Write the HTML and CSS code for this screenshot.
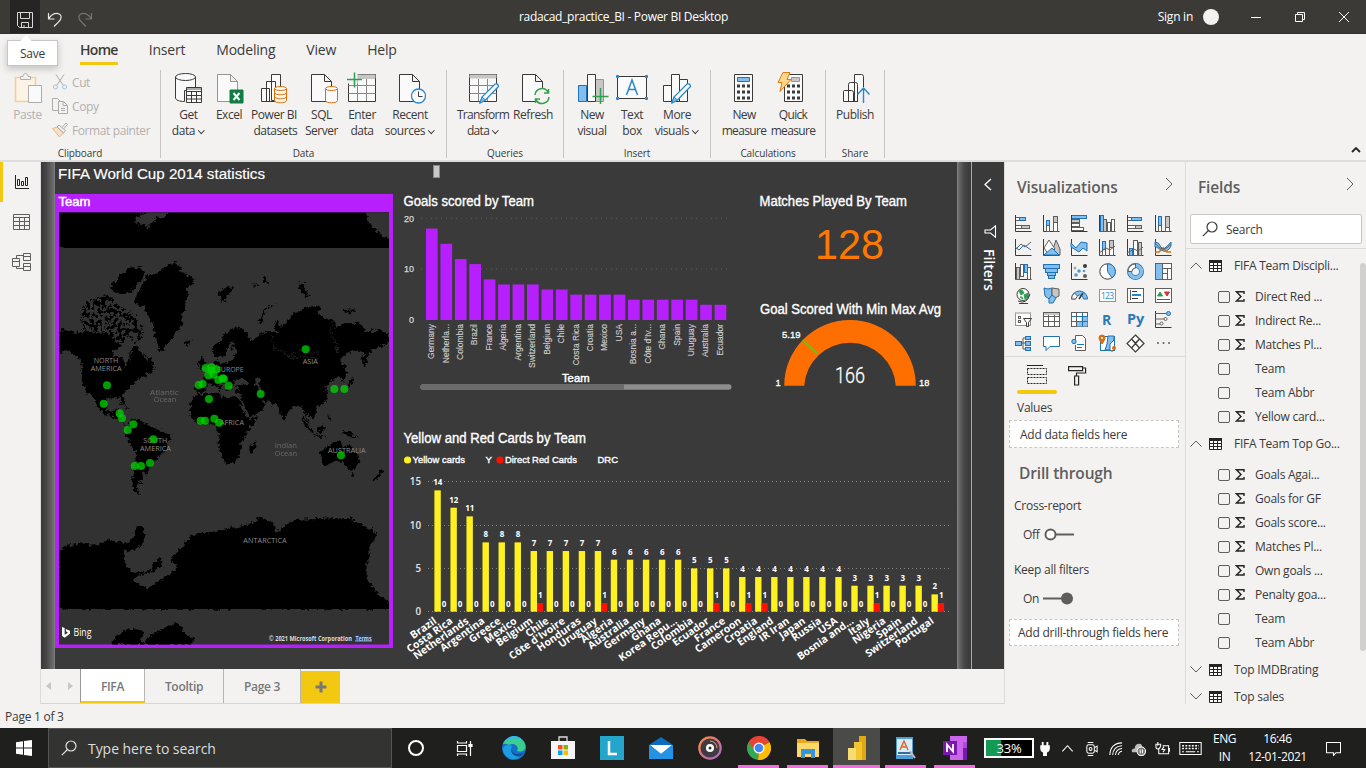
FILE: index.html
```html
<!DOCTYPE html>
<html lang="en">
<head>
<meta charset="utf-8">
<title>radacad_practice_BI - Power BI Desktop</title>
<link rel="stylesheet" href="styles.css">
</head>
<body>
<div class="app">
  <header class="titlebar">
    <div class="quick">
      <span class="qbtn active"><svg width="16" height="16" viewBox="0 0 16 16" fill="none" stroke="#d8d8d8"><path d="M.5 .5h15v15h-13l-2-2zM3.500 .5v6h9v-6M4.500 15.500v-5h7v5M7 15.500v-2.500"/></svg></span>
      <span class="qbtn"><svg width="16" height="16" viewBox="0 0 16 16" fill="none" stroke="#e6e6e6" stroke-width="1.200"><path d="M1.500 1v6h6M1.500 6.800C4 3 7 1.200 10 1.300c3.600.2 5 3.200 3.600 6-1 2-4 4.500-6.600 7.200"/></svg></span>
      <span class="qbtn dim"><svg width="16" height="16" viewBox="0 0 16 16" fill="none" stroke="#777573" stroke-width="1.200"><path d="M14.500 1v6h-6M14.500 6.800C12 3 9 1.200 6 1.300c-3.600.2-5 3.200-3.600 6 1 2 4 4.500 6.600 7.200"/></svg></span>
    </div>
    <div class="doc-title">radacad_practice_BI - Power BI Desktop</div>
    <div class="window-tools">
      <span class="signin">Sign in</span><span class="avatar"></span>
      <svg class="win" viewBox="0 0 12 12"><path d="M1 6.500h10"/></svg>
      <svg class="win" viewBox="0 0 12 12"><path d="M1.500 3.500h7v7h-7zM3.500 3.500v-2h7v7h-2"/></svg>
      <svg class="win" viewBox="0 0 12 12"><path d="M1 1l10 10M11 1L1 11"/></svg>
    </div>
    <div class="tooltip">Save</div>
  </header>

  <nav class="tabs">
    <span class="tab on">Home</span><span class="tab">Insert</span><span class="tab">Modeling</span><span class="tab">View</span><span class="tab">Help</span>
  </nav>

  <section class="ribbon">
    <div class="group g-clip">
      <div class="buttons">
        <div class="btn faded w-paste"><svg viewBox="0 0 30 30"><path d="M2.500 4.500h20v24h-20z" fill="#fbf3e4" stroke="#f0cfa0" stroke-width="1.600"/><path d="M7.500 6.500v-3h2.500c0-4 5-4 5 0h2.500v3z" fill="#f3f2f1" stroke="#b0aeac"/><path d="M15.500 12.500h13v17h-13z" fill="#fafafa" stroke="#b0aeac"/></svg><span>Paste</span></div>
        <div class="clip-list">
          <div><svg viewBox="0 0 16 16" fill="none" stroke="#aeacaa"><path d="M4 .5l7 10.500M12 .5L5 11"/><circle cx="3.500" cy="13" r="2" stroke="#9cc4dc"/><circle cx="12.500" cy="13" r="2" stroke="#9cc4dc"/></svg>Cut</div>
          <div><svg viewBox="0 0 16 16" fill="none" stroke="#aeacaa"><path d="M6 12.500H.5V.5h5l3 3M6.500 3.500h5l4 4v8h-9zM11 3.500v4h4.500M9 10.500h4M9 12.500h4"/></svg>Copy</div>
          <div><svg viewBox="0 0 16 16" fill="none" stroke="#aeacaa"><path d="M5 5l-4.500 1.500 7 8.500 4-4z" fill="#f6e1c5" stroke="#e9b888"/><path d="M5 5l6.500 6 2-2.500L7 3zM10 5.500l4-4.500 1.500 1.500-4 4.500"/></svg>Format painter</div>
        </div>
      </div>
      <div class="caption">Clipboard</div>
    </div>
    <div class="group g-data">
      <div class="buttons">
        <div class="btn w-get"><svg viewBox="0 0 30 30" fill="#fafafa" stroke="#3b3a39"><path d="M1.500 4v21c0 2 4 3.500 9 3.500V17.500h11V4"/><ellipse cx="11.500" cy="4" rx="10" ry="3.500"/><path d="M12.500 14.500h15v15h-15z"/><path d="M13 15.500h14M13 16.500h14" stroke="#aaa"/><path d="M12.500 18.500h15M12.500 22.500h15M12.500 26h15M17.500 18v11M22.500 18v11"/></svg><span>Get</span><span>data <i class="car"></i></span></div>
        <div class="btn w-excel"><svg viewBox="0 0 30 30" fill="#fafafa" stroke="#979593"><path d="M3.500 1.500h13l7 7v20h-20zM16.500 1.500v7h7"/><path d="M16 17h13v13H16z" fill="#107c41" stroke="#107c41"/><path d="M19.500 20l6 7M25.500 20l-6 7" stroke="#fff" stroke-width="2"/></svg><span>Excel</span></div>
        <div class="btn w-pbi"><svg viewBox="0 0 30 30" fill="#fafafa" stroke="#3b3a39"><path d="M12.500 1.500h9v26h-9zM7.500 8.500h9v20h-9zM2.500 15.500h8v13h-8z"/><path d="M15.500 15.500v12c0 3 12 3 12 0v-12" stroke="#d9700f" fill="#fff3e3"/><ellipse cx="21.500" cy="15.500" rx="6" ry="2" stroke="#d9700f"/><path d="M15.500 19.500c0 3 12 3 12 0M15.500 23.500c0 3 12 3 12 0" fill="none" stroke="#d9700f"/></svg><span>Power BI</span><span>&nbsp;datasets</span></div>
        <div class="btn w-sql"><svg viewBox="0 0 30 30" fill="#fafafa" stroke="#3b3a39"><path d="M4.500 1.500h13l7 7v20h-20zM17.500 1.500v7h7"/><path d="M18.500 15.500v12c0 3 12 3 12 0v-12" stroke="#d9700f"/><ellipse cx="24.500" cy="15.500" rx="6" ry="2" stroke="#d9700f"/></svg><span>SQL</span><span>Server</span></div>
        <div class="btn w-enter"><svg viewBox="0 0 30 30" fill="#fafafa" stroke="#3b3a39"><path d="M1.500 1.500h27v27h-27z"/><path d="M10 2h18v3.500H10z" fill="#c8c6c4" stroke="#c8c6c4"/><path d="M1.500 12.500h27M1.500 20.500h27M10.500 6v22M19.500 6v22" stroke="#888"/><path d="M-.5 -.5h11v11h-11z" fill="#f3f2f1" stroke="none"/><path d="M7.500-.5v15M0 6.500h15" stroke="#2f9e4f" stroke-width="1.500"/></svg><span>Enter</span><span>data</span></div>
        <div class="btn w-recent"><svg viewBox="0 0 30 30" fill="#fafafa" stroke="#3b3a39"><path d="M4.500 1.500h13l7 7v20h-20zM17.500 1.500v7h7"/><circle cx="23.500" cy="23" r="7" stroke="#2b88c8" stroke-width="1.300"/><path d="M23.500 18.500v5h4" fill="none"/></svg><span>Recent</span><span>sources <i class="car"></i></span></div>
      </div>
      <div class="caption">Data</div>
    </div>
    <div class="group g-query">
      <div class="buttons">
        <div class="btn w-trans"><svg viewBox="0 0 30 30" fill="#fafafa" stroke="#3b3a39"><path d="M1.500 1.500h27v27h-27z"/><path d="M2 2h26v3H2z" fill="#c8c6c4" stroke="#c8c6c4"/><path d="M1.500 12.500h27M1.500 20.500h27M10.500 6v22M19.500 6v22" stroke="#888"/><path d="M12 30l2-6L27 11q3-1 3.500 2.500L17.500 27z" stroke="#2b88c8" stroke-width="1.300"/><path d="M12 30l2-6 3.500 3z" fill="#83beec" stroke="#2b88c8"/></svg><span>Transform</span><span>data <i class="car"></i></span></div>
        <div class="btn w-refresh"><svg viewBox="0 0 30 30" fill="#fafafa" stroke="#3b3a39"><path d="M4.500 1.500h13l7 7v20h-20zM17.500 1.500v7h7"/><circle cx="24" cy="23" r="8" fill="#f3f2f1" stroke="none"/><path d="M17 22a7 7 0 0 1 13-3M30.500 16v4H26M31 24a7 7 0 0 1-13 3M17.500 30v-4H22" fill="none" stroke="#37a04f" stroke-width="1.500"/></svg><span>Refresh</span></div>
      </div>
      <div class="caption">Queries</div>
    </div>
    <div class="group g-insert">
      <div class="buttons">
        <div class="btn w-nv"><svg viewBox="0 0 30 30" fill="#fafafa" stroke="#3b3a39"><path d="M18.500 6.500h8v22h-8z" fill="#c8c6c4" stroke="#979593"/><path d="M1.500 12.500h8v16h-8z" fill="#83beec" stroke="#1f72b5"/><path d="M10.500 1.500h8v27h-8z"/><path d="M23.500 15v16M15.500 23.500h16" stroke="#2f9e4f" stroke-width="1.500"/></svg><span>New</span><span>visual</span></div>
        <div class="btn w-tb"><svg viewBox="0 0 30 30" fill="#fafafa" stroke="#3b3a39"><path d="M.5 3.500h29v22H.5z"/><path d="M9.500 22l5.500-15 5.500 15M11.500 16.500h7" fill="none" stroke="#2b88c8" stroke-width="1.500"/><path d="M-.5 2.500h2v2h-2zM28.500 2.500h2v2h-2zM-.5 24.500h2v2h-2zM28.500 24.500h2v2h-2z" fill="#2b88c8" stroke="#2b88c8"/></svg><span>Text</span><span>box</span></div>
        <div class="btn w-mv"><svg viewBox="0 0 30 30" fill="#fafafa" stroke="#3b3a39"><path d="M17.500 6.500h8v22h-8zM1.500 12.500h8v16h-8zM9.500 1.500h8v27h-8z"/><path d="M10 30l2-6L25 11q3-1 3.500 2.500L15.500 27z" stroke="#2b88c8" stroke-width="1.300"/><path d="M10 30l2-6 3.500 3z" fill="#83beec" stroke="#2b88c8"/></svg><span>More</span><span>visuals <i class="car"></i></span></div>
      </div>
      <div class="caption">Insert</div>
    </div>
    <div class="group g-calc">
      <div class="buttons">
        <div class="btn w-nm"><svg viewBox="0 0 30 30" fill="#fafafa" stroke="#3b3a39"><path d="M5.500 1.500h18v27h-18z"/><path d="M8.500 4.500h12v4h-12z" fill="#83beec" stroke="#1f72b5"/><path d="M8 13h13M8 19h13M8 25h13" stroke-width="3" stroke-dasharray="3 2"/></svg><span>New</span><span>measure</span></div>
        <div class="btn w-qm"><svg viewBox="0 0 30 30" fill="#fafafa" stroke="#3b3a39"><path d="M6.500 1.500h18v27h-18z"/><path d="M13.500 4.500h8v4h-8z" fill="#c8c6c4" stroke="#979593"/><path d="M9 13h13M9 19h13M9 25h13" stroke-width="3" stroke-dasharray="3 2"/><path d="M5-.5h7l-3 7h4L2 18.500l2-9H0z" fill="#ffd68a" stroke="#e07a10"/></svg><span>Quick</span><span>measure</span></div>
      </div>
      <div class="caption">Calculations</div>
    </div>
    <div class="group g-share">
      <div class="buttons">
        <div class="btn w-pub"><svg viewBox="0 0 30 30" fill="#fafafa" stroke="#3b3a39"><path d="M14.500 28.500v-27h7q2 0 2 2v25zM8.500 28.500v-17q0-2 2-2h5q2 0 2 2v17zM3.500 28.500v-10q0-1 1-1h7q2 0 2 2v9z"/><path d="M18 14h12v16H18z" fill="#f3f2f1" stroke="none"/><path d="M23.500 30V15M17.500 21.500l6-6.500 6 6.500" fill="none" stroke="#2b88c8" stroke-width="1.400"/></svg><span>Publish</span></div>
      </div>
      <div class="caption">Share</div>
    </div>
    <svg class="collapse" viewBox="0 0 10 6"><path d="M1 5l4-4 4 4" fill="none" stroke="#252423" stroke-width="1.800"/></svg>
  </section>

  <main class="main">
    <aside class="rail">
      <span class="rail-item on"><svg width="16" height="16" viewBox="0 0 16 16" fill="none" stroke="#252423"><path d="M1.500 1v13.500H15M3.500 5.500h2v6h-2zM7.500 7.500h2v4h-2zM11.500 3.500h2v8h-2z" /></svg></span>
      <span class="rail-item"><svg width="17" height="16" viewBox="0 0 17 16" fill="none" stroke="#605e5c"><path d="M.5 .5h16v15H.5zM.5 3.500h16M.5 7.500h16M.5 11.500h16M6.500 3.500v12M11.500 3.500v12"/></svg></span>
      <span class="rail-item"><svg width="19" height="18" viewBox="0 0 19 18" fill="none" stroke="#605e5c"><path d="M.5 5.500h7v8h-7zM.5 8.500h7M11.500 .5h7v7h-7zM11.500 3.500h7M11.500 10.500h7v7h-7zM11.500 13.500h7M4.500 5.500v-3h7M4.500 13.500v2h7"/></svg></span>
    </aside>

    <div class="work">
      <div class="canvas">
        <div class="gutter left"></div>
        <div class="page" id="page"></div>
        <div class="gutter right"></div>
        <div class="filters">
          <svg width="10" height="13" viewBox="0 0 10 13"><path d="M8 1L2 6.500 8 12" fill="none" stroke="#fff" stroke-width="1.300"/></svg>
          <svg class="funnel" width="13" height="13" viewBox="0 0 13 13"><path d="M11.500 .8v11.400L6.500 8H1V5h5.500z" fill="none" stroke="#fff" stroke-width="1.100"/></svg>
          <span>Filters</span>
        </div>
      </div>
      <div class="pagetabs">
        <span class="arrows"><i class="al"></i><i class="ar"></i></span>
        <span class="ptab on p1">FIFA</span><span class="ptab p2">Tooltip</span><span class="ptab p3">Page 3</span><span class="add"><svg width="12" height="12" viewBox="0 0 12 12"><path d="M6 .5v11M.5 6h11" stroke="#777" stroke-width="3"/></svg></span>
      </div>
    </div>

    <aside class="viz">
      <div class="pane-head"><h2>Visualizations</h2><svg width="8" height="14" viewBox="0 0 8 14"><path d="M1 1l6 6-6 6" fill="none" stroke="#605e5c"/></svg></div>
      <div class="viz-grid" id="vizgrid"></div>
      <div class="viz-tabs">
        <span class="vt on"><svg width="20" height="20" viewBox="0 0 20 20" fill="none" stroke="#252423"><path d="M0 .5h16"/><path d="M.5 3.500h19v6H.5zM.5 12.500h19v6H.5z" stroke-dasharray="2 1"/></svg></span>
        <span class="vt"><svg width="19" height="21" viewBox="0 0 19 21" fill="none" stroke="#252423" stroke-width="1.200"><path d="M.6 1.600h14v4H.6zM14.600 3h3v5H8.500v3M6.600 11h4v9h-4z"/></svg></span>
      </div>
      <div class="lbl values">Values</div>
      <div class="drop d1">Add data fields here</div>
      <h2 class="drill">Drill through</h2>
      <div class="lbl cross">Cross-report</div>
      <div class="toggle"><span>Off</span><svg width="31" height="13" viewBox="0 0 31 13"><path d="M11 6.500h19" stroke="#605e5c" stroke-width="2"/><circle cx="6.500" cy="6.500" r="5" fill="#fff" stroke="#605e5c" stroke-width="2"/></svg></div>
      <div class="lbl keep">Keep all filters</div>
      <div class="toggle"><span>On</span><svg width="31" height="13" viewBox="0 0 31 13"><path d="M0 6.500h20" stroke="#605e5c" stroke-width="2"/><circle cx="24" cy="6.500" r="6" fill="#605e5c"/></svg></div>
      <div class="drop d2">Add drill-through fields here</div>
    </aside>

    <aside class="fields">
      <div class="pane-head"><h2>Fields</h2><svg width="8" height="14" viewBox="0 0 8 14"><path d="M1 1l6 6-6 6" fill="none" stroke="#605e5c"/></svg></div>
      <div class="search"><svg width="16" height="16" viewBox="0 0 16 16" fill="none" stroke="#3b3a39" stroke-width="1.200"><circle cx="10" cy="6" r="5"/><path d="M6.500 9.500L.8 15.200"/></svg>Search</div>
      <div class="field-list" id="fieldlist"></div>
    </aside>
  </main>

  <footer class="status">Page 1 of 3</footer>

  <div class="taskbar">
    <span class="start"><svg width="16" height="16" viewBox="0 0 16 16" fill="#fff"><path d="M0 2.200l7-1v6.300H0zM8 1l8-1v7.500H8zM0 8.500h7v6.300l-7-1zM8 8.500h8V16l-8-1z"/></svg></span>
    <div class="tsearch"><svg width="16" height="16" viewBox="0 0 16 16" fill="none" stroke="#e0e0e0" stroke-width="1.200"><circle cx="10" cy="6" r="5"/><path d="M6.500 9.500L.8 15.200"/></svg>Type here to search</div>
    <span class="task"><svg viewBox="0 0 24 24"><circle cx="12" cy="12" r="7" fill="none" stroke="#fff" stroke-width="2"/></svg></span>
    <span class="task"><svg viewBox="0 0 24 24" fill="none" stroke="#fff" stroke-width="1.200"><path d="M4.500 9.500h9v6h-9zM4.500 5v2h9V5M4.500 20v-2h9v2M17.500 5v15"/><path d="M16 8.500h3v2h-3z" fill="#fff"/></svg></span>
    <span class="task"><svg viewBox="0 0 24 24"><circle cx="12" cy="12" r="12" fill="#1470c4"/><path d="M1 8C4-1 19-2 23 8c2 6-3 9-8 7 3-5-4-9-8-6-3-2-5-1-6-1z" fill="#3bcf8e"/><path d="M2 6C8-3 18 0 20 4 14 1 6 3 2 6z" fill="#35b9e8"/><path d="M10 11c-3 4 1 10 8 10-8 6-18-1-17-9 3-4 8-4 9-1z" fill="#1b9de2"/><path d="M10 11c-2 5 3 10 12 6-6 6-15 1-12-6z" fill="#0e3f7d"/></svg></span>
    <span class="task"><svg viewBox="0 0 24 24"><path d="M8 6V1h8v5" fill="none" stroke="#ddd" stroke-width="1.300"/><path d="M0 5h24v18H0z" fill="#f5f5f5"/><path d="M7 9h4.500v4.500H7z" fill="#f25022"/><path d="M12.500 9H17v4.500h-4.500z" fill="#7fba00"/><path d="M7 14.500h4.500V19H7z" fill="#00a4ef"/><path d="M12.500 14.500H17V19h-4.500z" fill="#ffb900"/></svg></span>
    <span class="task"><svg viewBox="0 0 24 24"><path d="M0 0h24v24H0z" fill="#24a5cc"/><path d="M9 5v13h8" fill="none" stroke="#fff" stroke-width="2.500"/></svg></span>
    <span class="task"><svg viewBox="0 0 24 24"><path d="M0 9L12 1l12 8v13H0z" fill="#0f6cbd"/><path d="M1 9h22L12 18z" fill="#fff"/><path d="M0 9l12 9 12-9v14H0z" fill="#2493e6"/></svg></span>
    <span class="task"><svg viewBox="0 0 24 24"><defs><linearGradient id="gr" x2="1" y2="1"><stop stop-color="#ff8a3c"/><stop offset="1" stop-color="#a767d8"/></linearGradient></defs><circle cx="12" cy="12" r="10.700" fill="#423a42" stroke="url(#gr)" stroke-width="2.200"/><circle cx="12" cy="12" r="4" fill="#fff"/><circle cx="12" cy="12" r="1.500" fill="#333"/><path d="M12 5a7 7 0 0 1 7 7" stroke="#ff9460" fill="none"/></svg></span>
    <span class="task run"><svg viewBox="0 0 24 24"><path d="M12 12L1.600 6A12 12 0 0 1 22.400 6z" fill="#e94335"/><path d="M12 12L1.600 6A12 12 0 0 0 11 24z" fill="#34a853"/><path d="M12 12L22.400 6A12 12 0 0 1 11 24z" fill="#fbbc05"/><path d="M1.600 6h11L7 14z" fill="#e94335"/><circle cx="12" cy="12" r="5.500" fill="#fff"/><circle cx="12" cy="12" r="4.300" fill="#4285f4"/></svg></span>
    <span class="task run"><svg viewBox="0 0 24 24"><path d="M1 3h8l2 2h12v5H1z" fill="#e9a820"/><path d="M1 7h22v14H1z" fill="#ffd869"/><path d="M5 13h14v9h-4v-4H9v4H5z" fill="#3494dc"/></svg></span>
    <span class="task run hot"><svg viewBox="0 0 24 24"><path d="M14 0h7v24h-7z" fill="#e0a90f"/><path d="M9 6h8v18H9z" fill="#f2c531"/><path d="M3 12h8v12H3z" fill="#f7dc72"/></svg></span>
    <span class="task run"><svg viewBox="0 0 24 24"><path d="M2 1h17v22H2z" fill="#4f9ed8"/><path d="M3 3h15v16H3z" fill="#d7ecfb"/><path d="M6 14l4-9 4 9M7.500 11h5" stroke="#e06a2a" fill="none" stroke-width="1.500"/><path d="M4 16h13v2H4z" fill="#336ca0"/><path d="M16 15l5 7" stroke="#bbb" stroke-width="2"/></svg></span>
    <span class="task run"><svg viewBox="0 0 24 24"><path d="M7 0h17v24H7z" fill="#ca64ea"/><path d="M20 6h4v6h-4z" fill="#ae4bd5"/><path d="M20 12h4v12h-4z" fill="#7719aa"/><path d="M0 5h14v14H0z" fill="#7719aa"/><path d="M4 16V8.500l6 7V8" stroke="#fff" stroke-width="1.800" fill="none"/></svg></span>
    <span class="battery"><b>33%</b></span>
    <span class="tray t1"><svg viewBox="0 0 16 16"><path d="M5 1v4M10 1v4" stroke="#fff" stroke-width="2"/><path d="M3 5h9v3q0 3-3 4v4H6v-4q-3-1-3-4z" fill="#fff"/></svg></span>
    <span class="tray t2"><svg viewBox="0 0 16 16"><path d="M2.500 11L8 5l5.500 6"/></svg></span>
    <span class="tray t3"><svg viewBox="0 0 16 16"><rect x="3" y="4" width="8" height="9" rx="2"/><circle cx="7" cy="8.500" r="1.500"/><path d="M4 1.500h6M4 15.500h6M11.500 7l2.500-1.500v6L11.500 10"/></svg></span>
    <span class="tray t4"><svg viewBox="0 0 16 16"><path d="M2 15C2 7 7 2 15 2M5 15c0-6 4-10 10-10M8 15c0-4 3-7 7-7M11 15c0-2 2-4 4-4"/></svg></span>
    <span class="tray t5"><svg viewBox="0 0 16 16"><path d="M1 12q-1-4 3-4 0-5 5-5 3 0 3 4 3 0 3 5z" fill="#bbb" stroke="none"/><circle cx="11" cy="11" r="4.500" fill="#777"/><path d="M9.800 9v4M12.200 9v4"/></svg></span>
    <span class="tray t6"><svg viewBox="0 0 16 16"><path d="M4 8.500v5h10.500V5H8M3 1v4M1 3.500v2q0 3 2 3t3-3v-2zM15.500 7.500v4M9.500 6l-2 3h3l-2 3"/></svg></span>
    <span class="tray t7"><svg class="kbd" viewBox="0 0 24 14"><path d="M.5 .5h23v13H.5z"/><path d="M3 4h18M3 7h18" stroke-dasharray="2 1.500" stroke-width="1.500"/><path d="M3 10.500h2M7 10.500h10M19 10.500h2"/></svg></span>
    <span class="lang"><span>ENG</span><span>IN</span></span>
    <span class="clock"><span>16:46</span><span>12-01-2021</span></span>
    <span class="tray t8"><svg viewBox="0 0 16 16"><path d="M.5 1.500h15v11h-5L8 15.500V12.500H.5z"/></svg></span>
  </div>
</div>
<script src="app.js"></script>
</body>
</html>
```
FILE: styles.css
```css
* { box-sizing: border-box; }
body { margin: 0; width: 1366px; height: 768px; overflow: hidden; font-family: "Open Sans", "Noto Sans", sans-serif; font-size: 12px; letter-spacing: -0.25px; color: #3b3a39; background: #f3f2f1; }
h2 { margin: 0; font-size: 15.5px; font-weight: 600; color: #605e5c; letter-spacing: -0.15px; line-height: 20px; }
.app { display: flex; flex-direction: column; height: 768px; }

.titlebar { position: relative; height: 34px; flex: none; background: #3b3a37; border-bottom: 1px solid #33302e; display: flex; justify-content: space-between; color: #fff; }
.quick { display: flex; padding-left: 10px; width: 430px; }
.qbtn { width: 30px; display: flex; align-items: center; justify-content: center; padding-top: 6px; }
.qbtn.active { background: #262523; }
.doc-title { width: 386px; padding-right: 6px; text-align: center; line-height: 34px; font-size: 12px; letter-spacing: -0.3px; }
.window-tools { width: 543px; display: flex; align-items: center; justify-content: flex-end; padding-right: 16px; }
.signin { margin-right: 10px; }
.avatar { width: 16px; height: 16px; border-radius: 50%; background: #f3f2f1; margin-right: 31px; }
.win { width: 12px; height: 12px; fill: none; stroke: #fff; }
.win + .win { margin-left: 32px; }
.tooltip { position: absolute; left: 7px; top: 40px; width: 51px; height: 26px; z-index: 5; background: #fff; border: 1px solid #c8c6c4; box-shadow: 0 3px 7px rgba(0,0,0,.2); color: #3b3a39; text-align: center; line-height: 26px; }
.tooltip::before { content: ""; position: absolute; left: 14px; top: -4px; width: 8px; height: 8px; background: #fff; transform: rotate(45deg); }

.tabs { height: 36px; flex: none; display: flex; padding-left: 80px; gap: 31px; font-size: 14px; letter-spacing: -0.2px; line-height: 31px; }
.tab { height: 31px; }
.tab.on { font-weight: 600; letter-spacing: -0.7px; border-bottom: 3px solid #f2c811; }

.ribbon { height: 92px; flex: none; display: flex; position: relative; border-bottom: 2px solid #dddddc; }
.group { height: 88px; border-right: 1px solid #c8c6c4; display: flex; flex-direction: column; }
.buttons { display: flex; height: 75px; flex: none; padding-top: 3px; }
.btn { display: flex; flex-direction: column; align-items: center; white-space: nowrap; line-height: 16px; letter-spacing: -0.45px; }
.btn svg { width: 30px; height: 30px; margin-bottom: 4px; overflow: visible; flex: none; }
.faded { color: #b3b0ad; }
.car { display: inline-block; width: 4.5px; height: 4.5px; border: solid #3b3a39; border-width: 0 1.500px 1.500px 0; transform: rotate(45deg); margin: 0 2px 3px 1px; }
.caption { text-align: center; font-size: 10px; line-height: 16px; letter-spacing: -0.1px; flex: none; }
.clip-list { display: flex; flex-direction: column; color: #b3b0ad; letter-spacing: -0.4px; }
.clip-list div { height: 24px; line-height: 20px; display: flex; gap: 4px; white-space: nowrap; }
.clip-list svg { width: 16px; height: 16px; margin-top: 1px; }
.g-clip { width: 161px; } .w-paste { width: 52px; padding-left: 3px; }
.g-data { width: 286px; } .g-data .buttons { padding-left: 7px; }
.w-get { width: 41px; } .w-excel { width: 40px; } .w-pbi { width: 50px; } .w-sql { width: 45px; } .w-enter { width: 36px; } .w-recent { width: 60px; }
.g-query { width: 117px; } .g-query .buttons, .g-insert .buttons, .g-calc .buttons { padding-left: 9px; }
.w-trans { width: 54px; letter-spacing: -0.7px; } .w-refresh { width: 46px; }
.g-insert { width: 147px; } .w-nv { width: 38px; } .w-tb { width: 42px; } .w-mv { width: 48px; }
.g-calc { width: 115px; } .w-nm { width: 48px; } .w-qm { width: 50px; } .w-nm, .w-qm { letter-spacing: -0.65px; }
.g-share { width: 59px; } .w-pub { width: 58px; }
.collapse { width: 10px; height: 6px; margin: 77px 5px 0 auto; }

.main { height: 542px; flex: none; display: flex; }
.rail { width: 41px; border-right: 1px solid #dddbd9; display: flex; flex-direction: column; }
.rail-item { height: 40px; display: flex; align-items: center; justify-content: center; border-left: 3px solid transparent; }
.rail-item.on { border-left-color: #f2c811; }
.work { width: 963px; display: flex; flex-direction: column; }
.canvas { height: 507px; display: flex; background: #3a3a3a; }
.gutter.left { width: 14px; background: linear-gradient(90deg, #393939 0, #444 35%, #6f6f6f 92%, #848484); }
.gutter.right { width: 14px; background: linear-gradient(90deg, #858585, #666 15%, #444 55%, #393939); }
.page { width: 902px; position: relative; background: #3a3a3a; }
.visual { position: absolute; display: block; }
.filters { width: 33px; border-left: 1px solid #a9a9a9; display: flex; flex-direction: column; align-items: center; color: #fff; padding-top: 16px; }
.filters .funnel { margin: 34px 0 11px 4px; }
.filters span { writing-mode: vertical-rl; font-size: 14px; font-weight: 600; line-height: 17px; letter-spacing: 0; margin-left: 2px; }
.pagetabs { height: 35px; display: flex; border-bottom: 1px solid #d8d6d4; color: #777; font-weight: 600; font-size: 12px; }
.arrows { width: 39px; display: flex; justify-content: space-between; align-items: center; padding: 0 7px 0 5px; }
.arrows i { border: 4px solid transparent; }
.arrows .al { border-right: 5px solid #c8c6c4; border-left-width: 0; }
.arrows .ar { border-left: 5px solid #c8c6c4; border-right-width: 0; }
.ptab { text-align: center; line-height: 35px; border-right: 1px solid #b8b6b4; letter-spacing: -0.3px; }
.ptab.on { background: #fff; border-bottom: 2px solid #f2c811; border-left: 1px solid #999; }
.p1 { width: 65px; } .p2 { width: 79px; } .p3 { width: 77px; }
.add { width: 39px; height: 32px; margin-top: 2px; background: #f2c811; display: flex; align-items: center; justify-content: center; }

.viz { width: 182px; border-right: 1px solid #dddbd9; border-left: 1px solid #dddbd9; padding-left: 3px; }
.pane-head { display: flex; justify-content: space-between; align-items: center; height: 49px; padding: 0 12px 0 9px; }
.pane-head svg { margin-bottom: 5px; }
.viz-grid { display: grid; grid-template-columns: repeat(6, 28px); grid-auto-rows: 24px; padding: 4px 0 0 7px; height: 145px; }
.viz-grid svg { width: 17px; height: 17px; overflow: visible; }
.viz-tabs { border-top: 1px solid #dddbd9; margin-left: -3px; padding-left: 12px; display: flex; height: 38px; }
.vt { width: 40px; height: 37px; display: flex; justify-content: center; padding-top: 8px; }
.vt.on { position: relative; }
.vt.on::after { content: ""; position: absolute; left: 0; bottom: 0; width: 40px; height: 4px; border-radius: 2px; background: #f2c811; }
.lbl { line-height: 18px; padding-left: 6px; }
.lbl.values { padding-left: 9px; margin-top: 5px; }
.drop { width: 170px; background: #fff; border: 1px dashed #c8c6c4; margin-left: 1px; padding-left: 10px; }
.d1 { height: 28px; line-height: 28px; margin-top: 3px; }
.d2 { height: 27px; line-height: 26px; padding-left: 8px; margin-top: 11px; white-space: nowrap; }
.drill { margin: 15px 0 0 11px; }
.cross { margin-top: 14px; }
.toggle { display: flex; align-items: center; gap: 4px; padding-left: 15px; height: 20px; margin: 9px 0 0; }
.toggle span { min-width: 16px; }
.keep { margin-top: 17px; }

.fields { width: 180px; position: relative; overflow: hidden; }
.fields .pane-head { padding: 0 12px 0 12px; }
.search { margin: 3px 4px 0 4px; height: 30px; width: 172px; border: 1px solid #c8c6c4; border-radius: 2px; background: #fff; display: flex; align-items: center; gap: 8px; padding-left: 11px; }
.field-list { margin-top: 4px; border-top: 1px solid #dddbd9; height: 455px; padding-top: 3px; position: relative; }
.field-list::after { content: ""; position: absolute; right: 0; top: 14px; width: 6px; height: 388px; background: #d2d0ce; border-radius: 3px; }
.table { height: 27px; display: flex; align-items: center; padding-left: 4px; white-space: nowrap; line-height: 16px; }
.table svg.ch { width: 12px; height: 7px; margin-right: 7px; }
.table svg.tb { width: 13px; height: 12px; margin-right: 12px; }
.items { padding: 5.500px 0 1.500px; }
.item { height: 24px; display: flex; align-items: center; padding-left: 32px; white-space: nowrap; }
.box { width: 12px; height: 12px; border: 1px solid #605e5c; border-radius: 2px; margin-right: 5px; }
.sig { width: 20px; height: 11px; }

.status { height: 24px; flex: none; padding-left: 5px; line-height: 25px; }
.taskbar { height: 40px; flex: none; background: #1f1f1e; color: #fff; display: flex; align-items: stretch; }
.start { width: 48px; display: flex; align-items: center; justify-content: center; }
.tsearch { width: 344px; background: #333332; border: 1px solid #565655; display: flex; align-items: center; gap: 11px; padding-left: 12px; font-size: 14px; color: #dcdcdc; letter-spacing: -0.05px; margin-right: -1px; }
.task { width: 49px; display: flex; align-items: center; justify-content: center; border-bottom: 3px solid transparent; padding-top: 3px; flex: none; }
.task svg { width: 24px; height: 24px; }
.task.run { border-bottom: none; padding: 3px 4px 0; background: linear-gradient(#ee6fdc, #ee6fdc) 4px 100% / 41px 3px no-repeat; padding-bottom: 3px; }
.task.hot { background: linear-gradient(#ee6fdc, #ee6fdc) 1px 100% / 47px 3px no-repeat, linear-gradient(#4a4a49, #4a4a49) 1px 0 / 47px 100% no-repeat; }
.battery { width: 50px; height: 20px; margin: 10px 0 0 5px; border: 2px solid #fff; background: linear-gradient(90deg, #149a52 33%, #000 33%); text-align: center; line-height: 16px; font-size: 13px; flex: none; }
.battery b { font-weight: 400; }
.tray { display: flex; align-items: center; justify-content: center; flex: none; }
.tray svg { width: 15px; height: 15px; fill: none; stroke: #fff; stroke-width: 1.100; }
.tray svg.kbd { width: 23px; height: 13px; }
.t1 { width: 22px; } .t2 { width: 23px; } .t3 { width: 24px; } .t4 { width: 25px; } .t5 { width: 21px; } .t6 { width: 26px; } .t7 { width: 30px; } .t8 { width: 44px; }
.lang, .clock { display: flex; flex-direction: column; align-items: center; line-height: 18px; padding-top: 2px; font-size: 12px; letter-spacing: -0.4px; }
.lang { width: 39px; } .clock { width: 67px; }
```
FILE: app.js
```js
const SANS = 'Liberation Sans, Arial, sans-serif';
const OPEN = 'Open Sans, Noto Sans, sans-serif';
const page = document.getElementById('page');

// Window coordinates of the report page's top-left corner
const PX = 55, PY = 162;

function visual(x, y, w, h, body) {
  page.insertAdjacentHTML('beforeend',
    `<svg class="visual" style="left:${x - PX}px;top:${y - PY}px" width="${w}" height="${h}" viewBox="${x} ${y} ${w} ${h}">${body}</svg>`);
}
function text(x, y, s, size, o = {}) {
  const fill = o.fill || '#fff';
  return `<text x="${x}" y="${y}" font-size="${size}" font-family="${o.font || SANS}" fill="${fill}" letter-spacing="0"` +
    (o.w ? ` textLength="${o.w}" lengthAdjust="spacingAndGlyphs"` : '') +
    (o.anchor ? ` text-anchor="${o.anchor}"` : '') + (o.bold ? ` font-weight="${o.bold}"` : '') +
    (o.semi ? ` stroke="${fill}" stroke-width="${o.semi}"` : '') +
    (o.t ? ` transform="${o.t}"` : '') + `>${s}</text>`;
}

visual(55, 162, 400, 30,
  text(58, 179, 'FIFA World Cup 2014 statistics', 15, { w: 207, semi: 0.15 }) +
  '<rect x="433.500" y="165.500" width="6" height="12" fill="#c8c8c8" stroke="#888"/>');

// ---- Map ----
const LAND = [
  'M522 308l23 10-5 17 20 10 20 7 2 10-20 23 3 20-10 20 3 20-13 20 5 25-10 15-20 25-15 15-15 25-12 2-8-27-8-25-2-25-8-17-12-18-3-20-17-2-17-13 9-25 13-20 15-35 20 0 20-10 20-20z',
  'M177 507L205 512 230 522 250 510 290 520 330 525 345 545 362 550 365 562 338 570 338 588 360 594 370 600 378 620 388 600 390 570 412 560 425 580 440 600 452 598 465 622 452 640 430 648 410 660 395 674 388 686 375 695 368 708 376 735 368 730 358 712 330 712 318 722 318 737 325 754 338 755 345 747 356 746 352 762 360 776 372 790 384 800 378 796 362 785 345 772 320 765 300 752 290 733 285 728 285 715 262 697 250 675 245 655 247 635 245 610 235 592 215 577 195 570 177 576z',
  'M390 780L400 775 430 785 450 800 470 810 500 817 513 827 508 845 500 870 480 885 470 900 455 920 440 935 428 945 422 965 410 975 415 995 420 1003 405 998 397 980 400 950 405 920 408 882 395 862 380 832 375 815 385 800z',
  'M635 572L640 555 660 545 670 525 690 510 710 502 740 515 745 532 760 540 780 522 805 515 830 520 823 495 832 480 843 500 862 492 870 470 900 450 935 435 960 440 950 460 975 475 1000 480 1010 500 1040 490 1080 488 1100 515 1140 510 1167 520 1167 545 1150 558 1120 568 1105 585 1098 610 1090 622 1086 600 1095 577 1070 570 1040 580 1020 600 1037 625 1040 645 1030 668 1020 650 1005 655 990 665 975 680 985 700 975 728 950 742 947 765 935 772 922 758 920 770 932 797 922 786 912 758 905 742 890 735 868 748 860 770 852 782 840 757 832 737 810 727 785 720 798 737 780 757 750 768 735 742 720 714 732 704 716 704 700 690 722 685 700 676 690 682 682 692 672 675 660 668 650 672 670 688 660 692 645 675 625 673 615 690 595 698 583 690 588 672 612 670 608 655 620 642 640 632 650 615 640 610 650 600 662 606 665 612 700 600 695 590 665 592 640 592z',
  'M590 703L625 700 660 698 665 712 690 715 700 709 717 714 724 737 735 760 745 775 770 772 765 785 745 812 733 832 725 845 722 870 715 890 700 910 680 914 670 900 662 875 655 850 660 830 650 805 640 790 605 792 590 790 572 765 568 740 575 720z',
  'M768 843L765 860 755 882 750 875 752 860zM907 770L940 815 935 820 905 780zM950 805L965 792 975 802 968 818 952 815zM938 822L980 828 980 832 940 828zM1025 812L1055 818 1075 835 1050 832 1030 820zM985 760L995 785 988 778zM1045 675L1058 650 1058 665 1040 690z',
  'M962 875L985 860 1000 850 1010 845 1025 840 1028 855 1040 862 1048 845 1055 865 1075 885 1078 900 1065 925 1045 930 1030 910 1005 905 985 912 970 917 965 900zM1055 940L1063 940 1060 952zM1145 928L1153 930 1140 945 1125 962 1122 958z',
  'M178 1170L200 1158 240 1150 290 1155 315 1150 320 1138 350 1145 385 1150 400 1135 405 1115 412 1095 425 1095 432 1115 435 1135 425 1155 400 1170 372 1175 372 1200 380 1220 400 1240 430 1238 455 1225 470 1195 480 1195 488 1220 465 1230 440 1240 405 1250 402 1260 415 1275 445 1285 455 1275 480 1260 500 1250 520 1232 530 1228 528 1210 512 1205 515 1190 540 1170 560 1140 590 1120 640 1115 700 1105 730 1098 765 1085 780 1072 800 1082 825 1090 828 1110 835 1115 850 1100 880 1080 940 1078 1000 1075 1050 1075 1075 1090 1105 1105 1130 1120 1125 1140 1108 1160 1108 1190 1100 1210 1100 1250 1110 1270 1130 1295 1150 1315 1169 1325 1169 1346 195 1346 174 1340z',
  'M335 1455L345 1432 375 1410 410 1405 432 1415 425 1432 432 1452 440 1435 470 1415 500 1400 520 1390 545 1400 555 1420 580 1435 575 1455z',
  'M553 545L575 540 572 552 560 556zM652 395L670 390 695 380 698 392 680 405 675 430 662 420zM825 433L805 445 790 465 785 492 778 488 782 465 795 447 815 435zM895 370L912 372 915 390 930 410 920 412 905 398zM597 608L605 590 612 602 620 622 600 625zM590 610L596 612 592 622zM755 375L772 372 775 378zM785 358L800 356 810 370 790 372zM1030 450L1065 448 1068 455 1035 458zM350 720L375 738 390 748 372 742z'
];
const ELLESMERE = 'M395 322L425 325 433 340 425 360 410 375 400 392 380 400 365 405 345 395 330 385 345 365 360 345z';
const ARCTIC = 'M250 435L280 410 320 405 345 415 360 440 400 460 420 490 430 525 405 545 380 530 365 545 345 540 320 520 280 515 250 505 245 465zM200 515L345 525 350 560 330 600 260 570zM400 560L445 590 460 625 420 640 390 610z';
const SEAS = 'M700 665L720 655 740 660 742 672 720 676 702 676zM765 655L780 655 778 675 786 700 775 698 768 675zM690 548L700 540 697 562 712 578 690 602 675 600 680 575zM375 1182h14v14h-14zM398 1175h12v12h-12z';
const DOTS = [[917,568],[321,676],[311,731],[596,675],[608,672],[617,624],[634,622],[650,628],[634,632],[625,646],[641,644],[655,660],[668,655],[672,657],[686,677],[627,717],[782,702],[1003,687],[1033,687],[359,760],[366,775],[400,793],[383,810],[460,838],[404,918],[423,918],[450,909],[602,782],[615,782],[643,776],[657,788],[1023,886]];
const mapText = (x, y, s, w, size = 23) => text(x, y, s, size, { w, fill: '#8b8b8b', font: OPEN });
visual(55, 194, 338, 454, `
  <defs>
    <filter id="coast" x="-5%" y="-5%" width="110%" height="110%"><feTurbulence type="fractalNoise" baseFrequency=".09" numOctaves="3" seed="4"/><feDisplacementMap in="SourceGraphic" scale="22" xChannelSelector="R" yChannelSelector="G"/></filter>
    <filter id="isles" x="-5%" y="-5%" width="110%" height="110%"><feTurbulence type="fractalNoise" baseFrequency=".085" numOctaves="3" seed="9" result="n"/><feColorMatrix in="n" values="0 0 0 0 0  0 0 0 0 0  0 0 0 0 0  0 0 0 14 -6.600" result="m"/><feDisplacementMap in="SourceGraphic" in2="n" scale="30" xChannelSelector="R" yChannelSelector="G" result="d"/><feComposite in="d" in2="m" operator="in"/></filter>
    <clipPath id="mapclip"><rect x="59" y="212.500" width="330" height="432"/></clipPath>
  </defs>
  <rect x="55" y="194" width="338" height="454" fill="#b71fff"/>
  ${text(58.5, 206, 'Team', 13.5, { w: 32, semi: 0.5 })}
  <g clip-path="url(#mapclip)"><rect x="59" y="212" width="330" height="434" fill="#323232"/>
  <g transform="translate(0 160) scale(.33333)">
    <path d="M174 155H1170V264H195L174 258z"/>
    <path fill="#323232" filter="url(#coast)" d="M403 178L410 168 435 163 440 150 510 150 490 170 465 178 450 195 442 203 430 192 410 190zM1101 150L1105 185 1120 205 1140 222 1175 245V150z"/>
    <path filter="url(#coast)" d="${LAND.join('')}"/>
    <path filter="url(#isles)" d="${ARCTIC}"/><path filter="url(#coast)" d="${ELLESMERE}"/>
    <path filter="url(#coast)" fill="#323232" d="${SEAS}"/>
    <path d="M174 1330H1170V1347H195L174 1341z"/>
    <path d="M815 525l5 40 30 10 20 20 40-5 50 5M1000 480l-10 40 20 30 0 30M860 590l40-20 60 10" fill="none" stroke="#333" stroke-width="2" filter="url(#coast)"/>
    ${mapText(281, 609, 'NORTH', 74)}${mapText(272, 632, 'AMERICA', 93)}
    ${mapText(651, 635, 'EUROPE', 80)}${mapText(908, 613, 'ASIA', 46)}
    <g opacity=".6">${mapText(450, 704, 'Atlantic', 86, 21)}${mapText(461, 726, 'Ocean', 68, 21)}${mapText(824, 865, 'Indian', 67, 21)}${mapText(824, 887, 'Ocean', 67, 21)}</g>
    ${mapText(660, 795, 'AFRICA', 72)}${mapText(430, 849, 'SOUTH', 72)}${mapText(420, 873, 'AMERICA', 93)}
    ${mapText(984, 879, 'AUSTRALIA', 113)}${mapText(730, 1149, 'ANTARCTICA', 130)}
    ${DOTS.map(d => `<circle cx="${d[0]}" cy="${d[1]}" r="12" fill="#00d500" fill-opacity=".74"/>`).join('')}
    <path d="M186 1401l8 3v20l10-6-5-3-2-8 13 5v9l-16 12-8-5z" fill="#fff"/>
  </g>
  ${text(73.5, 636, 'Bing', 10.5, { font: OPEN, w: 18 })}
  ${text(269, 640.5, '© 2021 Microsoft Corporation', 7, { font: OPEN, w: 83, bold: 700, fill: '#ddd' })}
  <rect x="355" y="634.500" width="17" height="7" fill="#263a60"/>
  ${text(355.5, 640.5, 'Terms', 7, { font: OPEN, w: 16, bold: 700, fill: '#bcd0f5' })}
  <path d="M355 641h17" stroke="#7da2df"/></g>`);

// ---- Goals scored column chart ----
const GOALS = [['Germany',18],['Netherla...',15],['Colombia',12],['Brazil',11],['France',8],['Algeria',7],['Argentina',7],['Switzerland',7],['Belgium',6],['Chile',6],['Costa Rica',5],['Croatia',5],['Mexico',5],['USA',5],['Bosnia a...',4],["Côte d'Iv...",4],['Ghana',4],['Spain',4],['Uruguay',4],['Australia',3],['Ecuador',3]];
let g = text(403.5, 206, 'Goals scored by Team', 13.8, { w: 130.5, semi: 0.35 });
[[0, 320], [10, 269], [20, 218.3]].forEach(([v, y]) => {
  g += text(414, y + 3.2, v, 9, { anchor: 'end', fill: '#d8d8d8', semi: 0.25 });
  if (v) g += `<path d="M421 ${y}H731" stroke="#5c5c5c" stroke-dasharray="1 4"/>`;
});
GOALS.forEach(([n, v], i) => {
  const x = 426 + i * 14.43, h = v * 5.08;
  g += `<rect x="${x}" y="${320 - h}" width="11.700" height="${h}" fill="#b71fff"/>`;
  g += text(0, 0, n, 8.5, { anchor: 'end', fill: '#d0d0d0', semi: 0.1, t: `translate(${x + 8.2} 324) rotate(-90)` });
});
g += text(562, 382, 'Team', 11.5, { w: 27.5, semi: 0.45 });
g += '<rect x="420.500" y="384.200" width="311" height="5.600" rx="2.800" fill="#8e8e8e"/><path d="M423 384.200H624v5.600H423a2.800 2.800 0 0 1 0-5.600" fill="#6b6b6b"/>';
visual(398, 192, 340, 205, g);

// ---- Card and gauge ----
visual(745, 192, 210, 90,
  text(759.5, 206, 'Matches Played By Team', 13.8, { w: 147.5, semi: 0.35 }) +
  text(815, 259, '128', 42, { w: 69, fill: '#ff7800' }));
visual(745, 296, 210, 100,
  text(760, 314, 'Goal Scored With Min Max Avg', 13.8, { w: 181, semi: 0.35 }) +
  `<path d="M784.200 385.700a65.800 65.800 0 0 1 131.600 0h-20a45.900 45.900 0 0 0-91.600 0z" fill="#ff6f00"/>
  <path d="M802.700 340l14.600 13.700" stroke="#35e01f" stroke-width="1.500"/>` +
  text(782, 338, '5.19', 9.3, { w: 18.5, semi: 0.3 }) + text(775.5, 386, '1', 9.3, { semi: 0.3 }) + text(919, 386, '18', 9.3, { semi: 0.3 }) +
  text(835, 382.5, '166', 22.5, { w: 30, font: 'Roboto, sans-serif', bold: 300, semi: 0.3 }));

// ---- Yellow / red cards clustered chart ----
const CARDS = [['Brazil',14],['Costa Rica',12],['Netherlands',11],['Argentina',8],['Greece',8],['Mexico',8],['Belgium',7,1],['Chile',7],["Côte d'Ivoire",7],['Honduras',7],['Uruguay',7,1],['Algeria',6],['Australia',6],['Germany',6],['Ghana',6],['Korea Repu...',6],['Colombia',5],['Ecuador',5,1],['France',5],['Cameroon',4,1],['Croatia',4,1],['England',4],['IR Iran',4],['Japan',4],['Russia',4],['USA',4],['Bosnia and...',3],['Italy',3,1],['Nigeria',3],['Spain',3],['Switzerland',3],['Portugal',2,1]];
let c = text(403.5, 443, 'Yellow and Red Cards by Team', 13.8, { w: 182.5, semi: 0.35 });
c += '<circle cx="407.600" cy="460" r="3.600" fill="#fff11f"/><circle cx="500" cy="460" r="3.600" fill="#f10"/>';
c += text(412.5, 463.3, 'Yellow cards', 9.7, { w: 52.5, semi: 0.35 }) + text(485.5, 463.3, 'Y', 9.7, { semi: 0.35 }) + text(505, 463.3, 'Direct Red Cards', 9.7, { w: 72, semi: 0.35 }) + text(597.5, 463.3, 'DRC', 9.7, { w: 20.5, semi: 0.35 });
const Y0 = 611.7, U = 8.667;
[0, 5, 10, 15].forEach(v => {
  c += text(421, Y0 - v * U + 3.5, v, 9.8, { font: OPEN, bold: 600, anchor: 'end', fill: '#e4e4e4' });
  c += `<path d="M428 ${Math.round(Y0 - v * U - .5) + .5}H949" stroke="#858585" stroke-dasharray="1 3"/>`;
});
CARDS.forEach(([n, y, r = 0], i) => {
  const x = 434.4 + i * 16.035;
  c += `<rect x="${x}" y="${Y0 - y * U}" width="6.400" height="${y * U}" fill="#fff11f"/>`;
  if (r) c += `<rect x="${x + 6.4}" y="${Y0 - U}" width="6.200" height="${U}" fill="#f10"/>`;
  c += text(x + 3.4, Y0 - y * U - 5, y, 8, { font: OPEN, bold: 700, anchor: 'middle' });
  c += text(x + 9.7, Y0 - r * U - 5, r, 8, { font: OPEN, bold: 700, anchor: 'middle' });
  c += text(0, 0, n, 10.4, { font: OPEN, bold: 700, anchor: 'end', t: `translate(${x + 3} 622.500) rotate(-35)` });
});
visual(398, 428, 558, 238, c);

// ---- Visualization picker icons ----
const AX = '<path d="M.5 0v16.500H16.500" fill="none" stroke="#3b3a39"/>';
const B = '#83beec', BS = '#1f72b5', G = '#c8c6c4', K = '#605e5c';
const r = (x, y, w, h, f = '#fff', s = K) => `<rect x="${x}.5" y="${y}.5" width="${w}" height="${h}" fill="${f}" stroke="${s}"/>`;
const p = (d, s = K, f = 'none', w = 1) => `<path d="${d}" fill="${f}" stroke="${s}" stroke-width="${w}"/>`;
const ICONS = [
  r(0,2,4,3) + r(4,2,6,3,B,BS) + r(0,10,6,3) + r(6,10,8,3,G) + AX,
  AX + r(3,5,3,5,B,BS) + r(3,10,3,6) + r(10,1,4,6,G) + r(10,7,4,9),
  r(0,0,15,3,B,BS) + r(0,4,8,3,G) + r(0,8,8,3) + r(0,12,12,3) + AX,
  AX + r(1,0,3,16,B,BS) + r(4,4,3,12,G) + r(8,7,3,9) + r(12,4,3,12),
  r(0,2,4,3) + r(4,2,10,3,B,BS) + r(0,10,8,3) + r(8,10,6,3,G) + AX,
  AX + r(3,1,3,9,B,BS) + r(3,10,3,6) + r(10,1,4,11,G) + r(10,12,4,4),
  AX + p('M0 11L6 5l4 3 6-5') + p('M0 8l4 3 5-5 7 5', BS),
  AX + p('M8 16L13 1l4 9v6z', K, G) + p('M1 9l5-8 6 9-6 6z', K, '#fff') + p('M1 16l8-7 7 7z', BS, B),
  AX + p('M0 4l5 5 5-6 6 1v8l-4-3-4 4-8-5z', BS, B),
  AX + r(3,2,3,8,B,BS) + r(3,10,3,6) + r(10,1,4,7,G) + r(10,8,4,8) + p('M0 14l7-5 4 2 5-4'),
  AX + r(2,9,3,7,B,BS) + r(6,1,4,15) + r(11,3,3,13,G) + p('M0 14l7-4 4 2 5-4'),
  AX + p('M0 3q4 0 6 5t10-5v4q-4 8-10 4T0 8z', BS, B) + p('M0 13h4l4-4 4 4h4', '#d9700f', 'none', 1.6) + p('M0 4q4 6 8 6t8-5'),
  AX + r(1,4,3,12,G) + r(5,1,3,12) + r(9,1,3,8,B,BS) + r(12,4,3,12),
  r(0,1,16,4,B,BS) + r(2,5,12,4,B,BS) + r(4,9,8,3,B,BS) + r(5,12,6,3,B,BS),
  AX + '<circle cx="14" cy="3" r="2" fill="#3b3a39"/><circle cx="14" cy="13" r="2" fill="#605e5c"/><circle cx="4" cy="5" r="1.500" fill="#aaa"/><circle cx="8" cy="8" r="1.800" fill="#4e9bd4"/><circle cx="5" cy="12" r="1.800" fill="#4e9bd4"/><circle cx="13" cy="8" r="1.300" fill="#4e9bd4"/>',
  '<circle cx="8.500" cy="8.500" r="7.700" fill="#fff" stroke="#3b3a39"/>' + p('M8.500 .8a7.700 7.700 0 0 1 4.500 14L8.500 8.500z', BS, B),
  '<circle cx="8.500" cy="8.500" r="6" fill="none" stroke="#1f72b5" stroke-width="5"/><circle cx="8.500" cy="8.500" r="6" fill="none" stroke="#83beec" stroke-width="3.500"/>' + p('M1 8.500a7.500 7.500 0 0 1 7.500-7.500v4A3.500 3.500 0 0 0 5 8.500z', K, '#fff'),
  r(0,0,16,16) + r(0,0,7,16,B,BS) + r(7,0,9,5) + r(7,10,5,6) + r(12,5,4,11),
  '<circle cx="8" cy="7.500" r="6" fill="#fff" stroke="#3b3a39"/>' + p('M4 4l3-1 2 3-3 2zM9 8l4-2 0 4-3 2zM5 10l2 0 1 2z', '#2f9e4f', '#2f9e4f') + p('M3 14q9 4 12-7M4 16.500h9', '#3b3a39'),
  p('M1 1l4 1 4-1v7l-3 4-4-3z', BS, B) + p('M9 1l7 1v7l-4 2-3-3z', K, G) + p('M6 12l3-4 4 3-3 5H6z', BS, B),
  p('M.5 12a8 8 0 0 1 16 0h-4a4 4 0 0 0-8 0z', BS, B) + p('M.5 12a8 8 0 0 1 3-6l3 3-2 3z', K, '#fff') + p('M8 12l4-6', '#3b3a39', 'none', 1.5),
  r(0,2,16,12,'#fff','#979593') + `<text x="2" y="11.500" font-size="8.500" font-family="Open Sans" letter-spacing="0" fill="#2b88c8" textLength="13">123</text>`,
  r(0,1,16,14) + p('M3.500 3v10') + p('M5 4.500h5M5 11.500h6', '#3b3a39') + p('M5 8h9', '#2b88c8', 'none', 2),
  r(0,1,16,14) + p('M2.500 9l2.500-4 2.500 4z', '#2f9e4f', '#2f9e4f') + p('M9.500 5h5l-2.500 4z', '#d13438', '#d13438') + p('M2 12.500h13'),
  r(0,1,15,13,'#fff','#979593') + r(3,5,2,2,'#fff') + r(3,9,2,2,'#fff') + p('M.5 2h15', G, 'none', 2) + p('M8.500 7.500h8l-3 4v4h-2v-4z', '#3b3a39', '#fff'),
  r(0,1,16,14) + p('M.5 5.500h16M.5 10.500h16M5.500 1.500v14M11.500 1.500v14') + p('M1 3h15', G, 'none', 2),
  r(0,1,16,14) + p('M11 6h5v9H6v-4h5z', B, B) + p('M.5 5.500h16M.5 10.500h16M5.500 1.500v14M11.500 1.500v14', BS) + r(0,1,5,14,'none'),
  `<text x="3" y="14" font-size="14" font-weight="700" font-family="Open Sans" fill="#2b7ab8" textLength="9">R</text>`,
  `<text x="0" y="13" font-size="14.500" font-weight="700" font-family="Open Sans" fill="#2b7ab8" textLength="17">Py</text>`,
  AX + p('M0 2.500h12M0 8h9M0 13h5') + '<circle cx="13.500" cy="2.500" r="2" fill="#83beec" stroke="#1f72b5"/><circle cx="10.500" cy="8" r="1.500" fill="#fff" stroke="#605e5c"/><circle cx="6.500" cy="12.500" r="1.500" fill="#fff" stroke="#605e5c"/>',
  p('M5 8h5M8 3v11M8 3h3M8 14h3') + r(0,6,6,4,B,BS) + r(10,1,5,3,B,BS) + r(10,6,5,4,B,BS) + r(10,12,5,3,B,BS),
  p('M.5 1.500h16v10H7l-4 4v-4H.5z', BS, '#fff'),
  p('M4.500 5V.5h7l3 3v12h-10V10', K, '#fff') + p('M6 9.500h7M6 12.500h5', BS) + '<circle cx="3" cy="6.500" r="2.200" fill="#83beec" stroke="#1f72b5"/>',
  r(1,1,14,14,'#fff',BS) + p('M9 1h6v4l-4 4v6H6l2-6z', BS, B) + p('M0 3q0-3 3-3t3 3q0 2-3 6Q0 5 0 3z', '#d9700f', '#d9700f') + '<circle cx="3" cy="3" r="1" fill="#fff"/><circle cx="15" cy="13" r="2" fill="#d9700f"/><circle cx="13" cy="16" r="1" fill="#d9700f"/>',
  p('M8.500 0l4 4-4 4-4-4zM4.500 4l4 4.500-4 4.500-4.500-4.500zM12.500 4l4.500 4.500-4.500 4.500-4-4.500zM8.500 8.500l4 4.500-4 4-4-4z', '#3b3a39', '#fff', 1.2),
  '<circle cx="3" cy="8" r="1" fill="#605e5c"/><circle cx="8.500" cy="8" r="1" fill="#605e5c"/><circle cx="14" cy="8" r="1" fill="#605e5c"/>'
];
document.getElementById('vizgrid').innerHTML = ICONS.map(i => `<svg viewBox="0 0 17 17">${i}</svg>`).join('');

// ---- Field list ---- (a leading * marks a summable field)
const TABLES = [
  ['FIFA Team Discipli...', ['*Direct Red ...', '*Indirect Re...', '*Matches Pl...', 'Team', 'Team Abbr', '*Yellow card...']],
  ['FIFA Team Top Go...', ['*Goals Agai...', '*Goals for GF', '*Goals score...', '*Matches Pl...', '*Own goals ...', '*Penalty goa...', 'Team', 'Team Abbr']],
  ['Top IMDBrating'], ['Top sales']
];
document.getElementById('fieldlist').innerHTML = TABLES.map(([name, items]) =>
  `<div class="table"><svg class="ch" viewBox="0 0 12 7"><path d="${items ? 'M.5 6.500L6 1l5.500 5.500' : 'M.5 .5L6 6 11.500 .5'}" fill="none" stroke="#605e5c"/></svg>
  <svg class="tb" viewBox="0 0 13 12"><path d="M.5 .5h12v11H.5zM.5 5.500h12M.5 8.500h12M4.500 3v8M8.500 3v8" fill="#fff" stroke="#252423"/><path d="M0 0h13v3H0z" fill="#252423"/></svg>${name}</div>` +
  (items ? `<div class="items">${items.map(t => `<div class="item"><span class="box"></span><svg class="sig" viewBox="0 0 20 11">${t[0] === '*' ? '<path d="M9 3V.8H1.500L6 5.500 1.500 10H9V8" fill="none" stroke="#252423" stroke-width="1.400"/>' : ''}</svg>${t.replace('*', '')}</div>`).join('')}</div>` : '')).join('');
```
